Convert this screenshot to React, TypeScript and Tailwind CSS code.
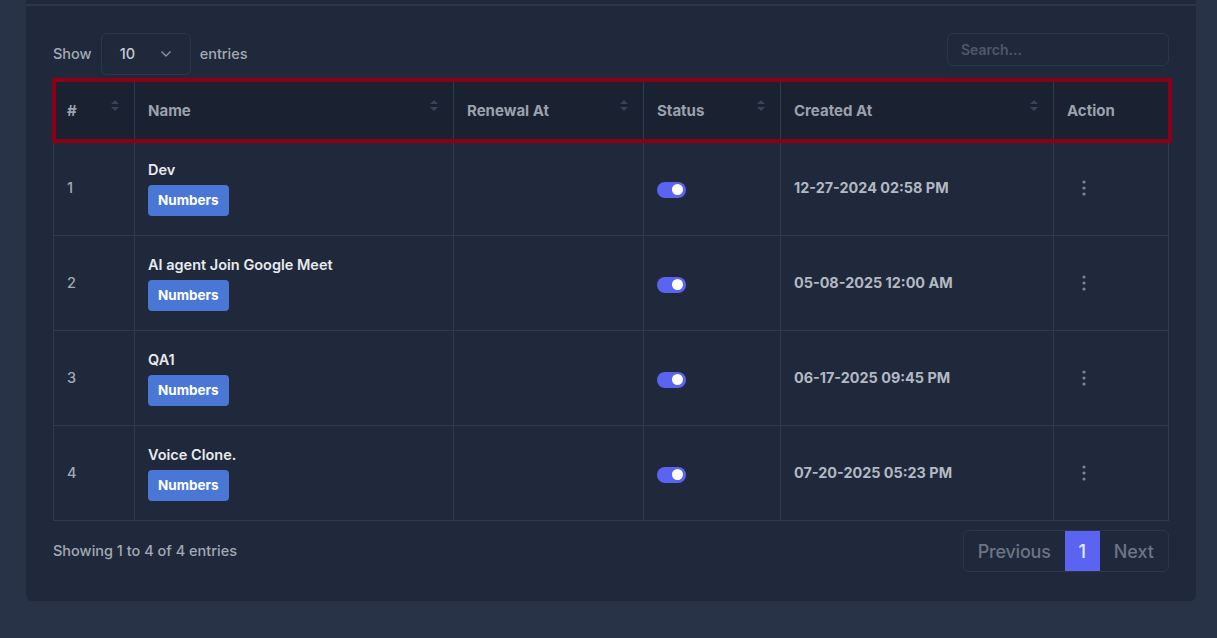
import React from "react";

type Row = { id: number; name: string; created: string };

const rows: Row[] = [
  { id: 1, name: "Dev", created: "12-27-2024 02:58 PM" },
  { id: 2, name: "AI agent Join Google Meet", created: "05-08-2025 12:00 AM" },
  { id: 3, name: "QA1", created: "06-17-2025 09:45 PM" },
  { id: 4, name: "Voice Clone.", created: "07-20-2025 05:23 PM" },
];

const SortIcon = () => (
  <svg width="8" height="12" viewBox="0 0 8 12" className="shrink-0">
    <path d="M4 0 L8 4 L0 4 Z" fill="#374357" />
    <path d="M0 7 L8 7 L4 11 Z" fill="#374357" />
  </svg>
);

const Th = ({
  label,
  width,
  sort = true,
  last = false,
}: {
  label: string;
  width: string;
  sort?: boolean;
  last?: boolean;
}) => (
  <th
    className={`${width} h-[59px] px-[13px] pt-[1px] text-left align-middle font-bold text-[15px] text-[#9aa2ae] ${
      last ? "" : "border-r border-[#2e3a4d]"
    }`}
  >
    <div className="flex items-center justify-between">
      <span>{label}</span>
      {sort && (
        <span className="mr-[2px] -mt-[11px]">
          <SortIcon />
        </span>
      )}
    </div>
  </th>
);

const Toggle = () => (
  <span className="flex h-[16px] w-[29px] items-center justify-end rounded-full bg-[#5b64f1] px-[3px]">
    <span className="h-[11px] w-[11px] rounded-full bg-white" />
  </span>
);

const Dots = () => (
  <svg width="4" height="16" viewBox="0 0 4 16">
    <circle cx="2" cy="2" r="1.6" fill="#7b8494" />
    <circle cx="2" cy="8" r="1.6" fill="#7b8494" />
    <circle cx="2" cy="14" r="1.6" fill="#7b8494" />
  </svg>
);

export default function App() {
  return (
    <div
      className="min-h-[638px] bg-[#283347] px-[26px]"
      style={{ fontFamily: "Inter, 'Noto Sans', sans-serif" }}
    >
      <div className="w-[1170px] rounded-b-md bg-[#1f293b] pb-[29px]">
        <div className="h-[6px] border-b-2 border-[#2b3649]" />

        <div className="px-[27px]">
          {/* controls */}
          <div className="mt-[27px] flex items-start justify-between">
            <div className="flex items-center gap-[9px] text-[14.5px] font-medium text-[#a3aab5]">
              <span>Show</span>
              <div className="flex h-[42px] w-[90px] items-center justify-between rounded-md border border-[#2b3649] pl-[18px] pr-[18px] text-[#c4c9d1]">
                <span>10</span>
                <svg width="12" height="8" viewBox="0 0 12 8" fill="none">
                  <path d="M1.5 1.5 L6 6 L10.5 1.5" stroke="#8a93a1" strokeWidth="1.4" />
                </svg>
              </div>
              <span>entries</span>
            </div>
            <div className="flex h-[33px] w-[222px] items-center rounded-md border border-[#2b3649] px-[13px] text-[14px] font-semibold text-[#4d586a]">
              Search...
            </div>
          </div>

          {/* table */}
          <div className="relative mt-[6px]">
            <table className="w-[1115px] table-fixed border-collapse border border-[#2e3a4d]">
              <thead className="bg-[#1a2130]">
                <tr>
                  <Th label="#" width="w-[81px]" />
                  <Th label="Name" width="w-[319px]" />
                  <Th label="Renewal At" width="w-[190px]" />
                  <Th label="Status" width="w-[137px]" />
                  <Th label="Created At" width="w-[273px]" />
                  <Th label="Action" width="w-[115px]" sort={false} last />
                </tr>
              </thead>
              <tbody>
                {rows.map((r) => (
                  <tr key={r.id} className="border-t border-[#2e3a4d]">
                    <td className="border-r border-[#2e3a4d] px-[13px] text-[14.5px] font-medium text-[#a3aab5]">
                      {r.id}
                    </td>
                    <td className="border-r border-[#2e3a4d] px-[13px] py-[19px]">
                      <div className="text-[14.5px] font-semibold leading-[20px] text-[#e8eaee]">
                        {r.name}
                      </div>
                      <span className="mt-[5px] inline-flex h-[31px] items-center rounded-[4px] bg-[#4a77d6] px-[10px] text-[13.5px] font-bold text-white">
                        Numbers
                      </span>
                    </td>
                    <td className="border-r border-[#2e3a4d]" />
                    <td className="border-r border-[#2e3a4d] px-[13px] pt-[3px]">
                      <Toggle />
                    </td>
                    <td className="border-r border-[#2e3a4d] px-[13px] text-[14.4px] font-bold text-[#b3b9c3]">
                      {r.created}
                    </td>
                    <td className="px-[13px]">
                      <span className="flex w-[34px] justify-center">
                        <Dots />
                      </span>
                    </td>
                  </tr>
                ))}
              </tbody>
            </table>
            {/* red highlight around the header row */}
            <div className="pointer-events-none absolute -left-[1px] -top-[3px] h-[65px] w-[1120px] border-[4px] border-[#8a0016]" />
          </div>

          {/* footer */}
          <div className="mt-[9px] flex items-center justify-between">
            <span className="text-[14.5px] font-medium text-[#a3aab5]">
              Showing 1 to 4 of 4 entries
            </span>
            <div className="flex h-[42px] overflow-hidden rounded-md border border-[#2b3649] text-[18px] font-medium text-[#6c7585]">
              <span className="flex items-center px-[14px] tracking-[-0.2px]">Previous</span>
              <span className="flex w-[35px] items-center justify-center bg-[#5b64f1] text-[#e8eaff]">
                1
              </span>
              <span className="flex items-center px-[14px]">Next</span>
            </div>
          </div>
        </div>
      </div>
    </div>
  );
}
